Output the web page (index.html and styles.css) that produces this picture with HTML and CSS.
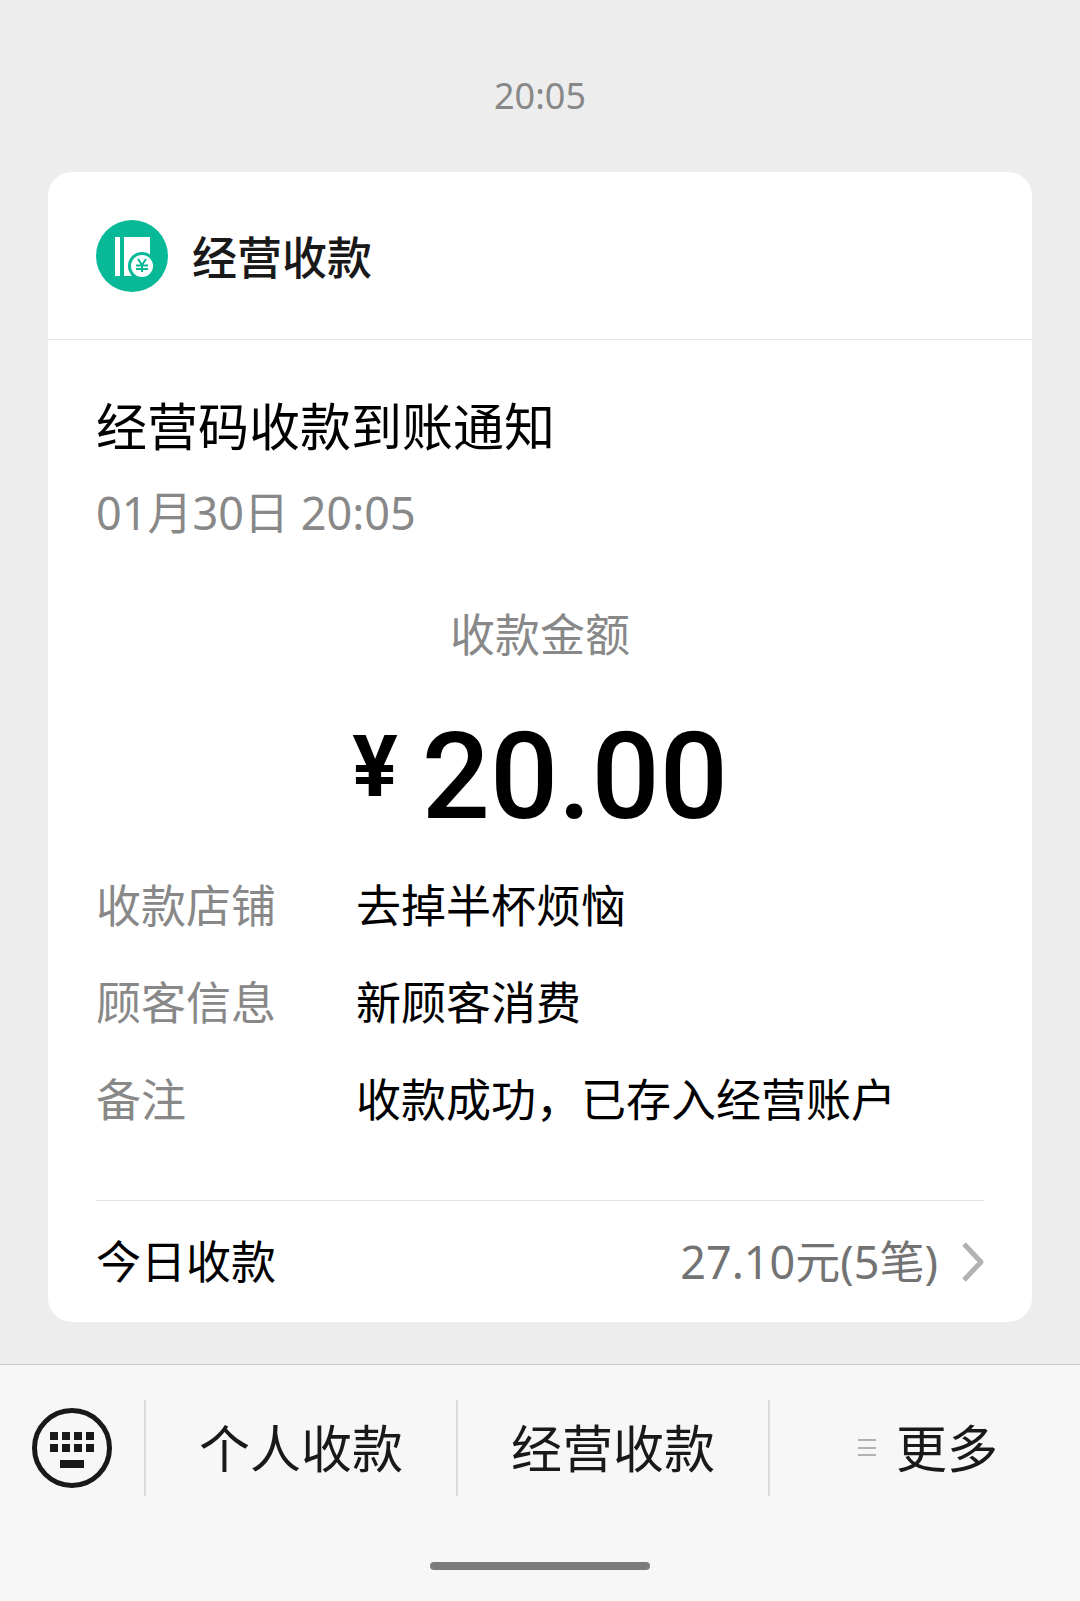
FILE: index.html
```html
<!DOCTYPE html>
<html lang="zh-CN">
<head>
  <meta charset="UTF-8">
  <meta name="viewport" content="width=device-width, initial-scale=1.0">
  <title>经营收款</title>
  <link rel="stylesheet" href="styles.css">
</head>
<body>
  <main class="chat">
    <time class="chat-time">20:05</time>
    <article class="card">
      <header class="card-header">
        <svg class="logo" viewBox="0 0 72 72" aria-hidden="true">
          <circle cx="36" cy="36" r="36" fill="#07b997"/>
          <path d="M19 17h5v39h-5zM28 17h26v39H28z" fill="#fff"/>
          <circle cx="46" cy="46" r="14" fill="#07b997"/>
          <circle cx="46" cy="46" r="11" fill="#fff"/>
          <path d="M42 39l4 6 4-6M40 45.500h12M40 49h12M46 45v7" fill="none" stroke="#07b997" stroke-width="2"/>
        </svg>
        <h1 class="card-name">经营收款</h1>
      </header>
      <div class="card-body">
        <h2 class="title">经营码收款到账通知</h2>
        <p class="date">01月30日 20:05</p>
        <p class="amount-label">收款金额</p>
        <p class="amount"><span class="yen">¥</span><span>20.00</span></p>
        <dl class="details">
          <dt>收款店铺</dt><dd>去掉半杯烦恼</dd>
          <dt>顾客信息</dt><dd>新顾客消费</dd>
          <dt>备注</dt><dd>收款成功，已存入经营账户</dd>
        </dl>
        <a class="summary" href="#">
          <span>今日收款</span>
          <span class="summary-value">27.10元(5笔)</span>
          <svg class="chevron" viewBox="0 0 22 40" aria-hidden="true">
            <path d="M2 2l17 18L2 38" fill="none" stroke="#b2b2b2" stroke-width="5" stroke-linejoin="round"/>
          </svg>
        </a>
      </div>
    </article>
  </main>
  <footer class="bar">
    <nav class="menu">
      <button class="keyboard" type="button" aria-label="键盘">
        <svg viewBox="0 0 80 80" aria-hidden="true">
          <circle cx="40" cy="40" r="37.500" fill="none" stroke="#191919" stroke-width="5"/>
          <path d="M18 24h8v8h-8zM30 24h8v8h-8zM42 24h8v8h-8zM54 24h8v8h-8zM18 36h8v8h-8zM30 36h8v8h-8zM42 36h8v8h-8zM54 36h8v8h-8zM28 52h24v8H28z" fill="#191919"/>
        </svg>
      </button>
      <button class="menu-item" type="button">个人收款</button>
      <button class="menu-item" type="button">经营收款</button>
      <button class="menu-item more" type="button">
        <svg class="lines" viewBox="0 0 18 20" aria-hidden="true">
          <path d="M0 2h18M0 10h18M0 17h18" stroke="#b2b2b2" stroke-width="2"/>
        </svg>
        更多
      </button>
    </nav>
    <div class="home-indicator"></div>
  </footer>
</body>
</html>
```

FILE: styles.css
```css
* {
  box-sizing: border-box;
}
body {
  margin: 0;
  min-height: 100vh;
  display: flex;
  flex-direction: column;
  background: #ededed;
  color: #000;
  font-family: "Noto Sans", "Noto Sans CJK SC", sans-serif;
  font-size: 45px;
  line-height: 64px;
}
h1, h2, p, dl, dd {
  margin: 0;
}
.chat {
  flex: 1;
  padding: 64px 48px 42px;
}
.chat-time {
  display: block;
  color: #888;
  font-size: 36px;
  text-align: center;
}
.card {
  margin-top: 44px;
  background: #fff;
  border-radius: 24px;
}
.card-header {
  display: flex;
  align-items: center;
  gap: 24px;
  padding: 48px 48px 47px;
  border-bottom: 1px solid #e5e5e5;
}
.logo {
  width: 72px;
  height: 72px;
}
.card-name {
  color: #191919;
  font-size: 45px;
  font-weight: 500;
  font-family: "Noto Sans CJK SC", sans-serif;
}
.card-body {
  padding: 50px 48px 0;
}
.title {
  font-size: 51px;
  font-weight: 400;
  line-height: 72px;
}
.date {
  margin-top: 19px;
  color: #888;
}
.amount-label {
  margin-top: 58px;
  color: #888;
  text-align: center;
}
.amount {
  display: flex;
  justify-content: center;
  gap: 24px;
  margin-top: 50px;
  font-family: Roboto, sans-serif;
  font-size: 120px;
  font-weight: 500;
  line-height: 120px;
}
.yen {
  font-size: 85px;
  font-weight: 700;
  line-height: 100px;
}
.details {
  display: grid;
  grid-template-columns: 236px 1fr;
  gap: 33px 24px;
  margin-top: 37px;
}
.details dt {
  color: #888;
}
.summary {
  display: flex;
  align-items: center;
  margin-top: 68px;
  padding: 29px 0 28px;
  border-top: 1px solid #e5e5e5;
  color: inherit;
  text-decoration: none;
}
.summary-value {
  margin-left: auto;
  color: #737373;
}
.chevron {
  width: 22px;
  height: 40px;
  margin-left: 24px;
}
.bar {
  padding-top: 35px;
  background: #f7f7f7;
  border-top: 1px solid #ccc;
}
.menu {
  display: grid;
  grid-template-columns: 144px repeat(3, 1fr);
  height: 96px;
}
.menu button {
  display: flex;
  align-items: center;
  justify-content: center;
  padding: 0;
  border: 0;
  background: none;
  color: #191919;
  font: inherit;
  font-size: 51px;
}
.keyboard svg {
  width: 80px;
  height: 80px;
}
.menu .menu-item {
  border-left: 2px solid #dcdcdc;
}
.menu .more {
  gap: 20px;
  padding-left: 6px;
}
.lines {
  width: 18px;
  height: 20px;
}
.home-indicator {
  width: 220px;
  height: 8px;
  margin: 66px auto 31px;
  border-radius: 4px;
  background: #7b7b7b;
}
```
